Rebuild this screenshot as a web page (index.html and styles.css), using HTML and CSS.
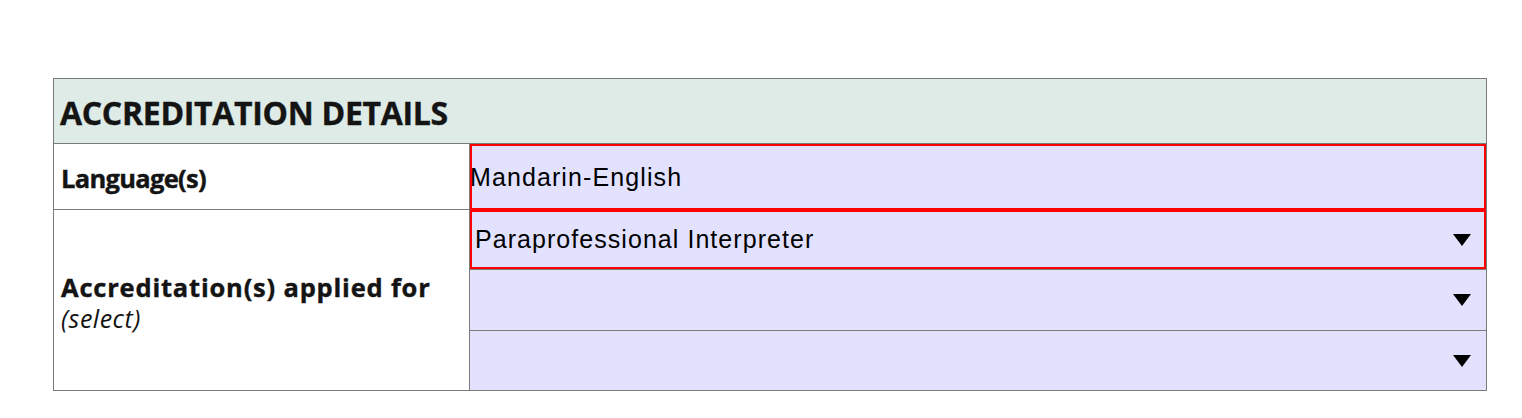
FILE: index.html
```html
<!DOCTYPE html>
<html lang="en">
<head>
<meta charset="utf-8">
<title>Accreditation details</title>
<link rel="stylesheet" href="styles.css">
</head>
<body>
<div class="page">
  <div class="table">
    <div class="header">ACCREDITATION DETAILS</div>

    <div class="label label-lang">Language(s)</div>
    <div class="field field-text invalid">Mandarin-English</div>

    <div class="label label-acc">
      <div class="label-main">Accreditation(s) applied for</div>
      <div class="label-sub">(select)</div>
    </div>
    <div class="fields">
      <div class="field select invalid s1">
        <span class="value">Paraprofessional Interpreter</span>
        <span class="caret"></span>
      </div>
      <div class="field select s2">
        <span class="value"></span>
        <span class="caret"></span>
      </div>
      <div class="field select s3">
        <span class="value"></span>
        <span class="caret"></span>
      </div>
    </div>
  </div>
</div>
</body>
</html>
```

FILE: styles.css
```css
html, body {
  margin: 0;
  padding: 0;
  background: #ffffff;
}

.page {
  padding: 78px 0 0 53px;
}

.table {
  width: 1434px;
  box-sizing: border-box;
  border: 1px solid #7b7b7b;
  display: grid;
  grid-template-columns: 416px 1fr;
  grid-template-rows: 65px 66px 180px;
}

.header {
  grid-column: 1 / -1;
  background: #dfebe6;
  border-bottom: 1px solid #7b7b7b;
  display: flex;
  align-items: center;
  padding: 3px 0 0 6px;
  box-sizing: border-box;
  font-family: "Open Sans", "Liberation Sans", sans-serif;
  font-weight: 700;
  font-size: 32px;
  color: #141414;
  letter-spacing: -0.3px;
  -webkit-text-stroke: 0.4px #141414;
}

.label {
  border-right: 1px solid #7b7b7b;
  padding-left: 7px;
  font-family: "Open Sans", "Liberation Sans", sans-serif;
  color: #141414;
  display: flex;
  flex-direction: column;
}

.label-lang {
  justify-content: center;
  border-bottom: 1px solid #7b7b7b;
  font-weight: 700;
  font-size: 25.5px;
  letter-spacing: -0.7px;
  padding-top: 2px;
  -webkit-text-stroke: 0.4px #141414;
}

.label-acc {
  justify-content: flex-start;
  padding-top: 61px;
}

.label-main {
  font-weight: 700;
  font-size: 25.5px;
  line-height: 32px;
  letter-spacing: 0.8px;
  -webkit-text-stroke: 0.4px #141414;
}

.label-sub {
  font-style: italic;
  font-size: 25px;
  line-height: 30px;
  letter-spacing: 0.5px;
}

.field {
  background: #e2e2fe;
  font-family: "Liberation Sans", Arial, sans-serif;
  font-size: 25px;
  letter-spacing: 1.1px;
  color: #000000;
  display: flex;
  align-items: center;
  box-sizing: border-box;
}

.field.invalid {
  box-shadow: inset 0 0 0 2px #ff0000;
}

.field-text {
  padding-left: 0;
}

.fields {
  display: flex;
  flex-direction: column;
}

.select {
  justify-content: space-between;
  padding: 0 15px 0 5px;
  border-bottom: 1px solid #7b7b7b;
  letter-spacing: 1.05px;
}

.s1 { height: 60px; }
.s2 { height: 61px; }
.s3 { height: 59px; border-bottom: none; }

.caret {
  width: 0;
  height: 0;
  border-left: 9px solid transparent;
  border-right: 9px solid transparent;
  border-top: 12px solid #000000;
}
```
